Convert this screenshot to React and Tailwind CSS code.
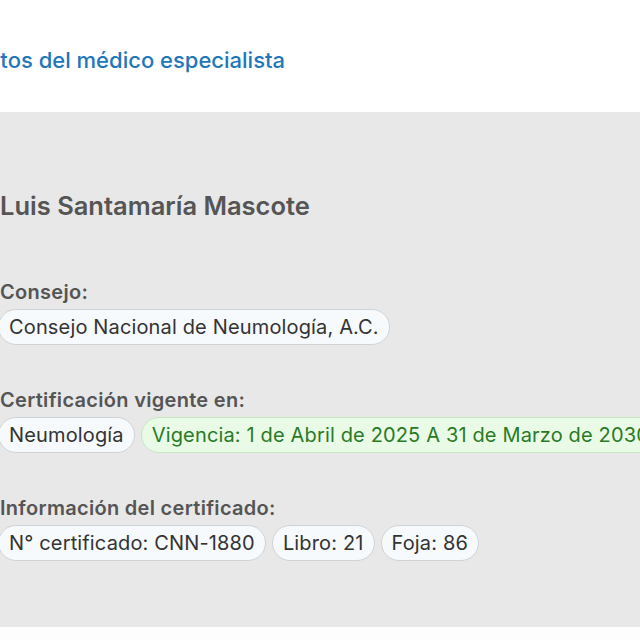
import React from 'react';

const pill = 'inline-flex items-center h-[36px] px-[10px] rounded-full border text-[20px] tracking-[0.15px] leading-none whitespace-nowrap';

function Pill({ children, green }) {
  return (
    <span
      className={
        green
          ? `${pill} bg-[#e9fbe7] border-[#c6e6c0] text-[#2a7a25]`
          : `${pill} bg-[#f7fafc] border-[#cfd3d6] text-[#333333]`
      }
    >
      {children}
    </span>
  );
}

function Field({ label, children }) {
  return (
    <div className="flex flex-col gap-[5px]">
      <h3 className="text-[20px] tracking-[0.3px] font-semibold text-[#555555] leading-[24px] pl-[2px]">{label}</h3>
      <div className="flex gap-[6px]">{children}</div>
    </div>
  );
}

export default function App() {
  return (
    <div className="w-[640px] h-[640px] overflow-hidden bg-[#fdfdfd]" style={{ fontFamily: 'Inter, "Noto Sans", sans-serif' }}>
      <header className="h-[112px] bg-white flex items-center">
        <h2 className="ml-[-28px] mt-[8px] text-[22px] font-medium text-[#1f76bb] whitespace-nowrap">
          Datos del médico especialista
        </h2>
      </header>
      <section className="h-[515px] bg-[#e8e8e8] ml-[-2px] pt-[80px] flex flex-col">
        <h1 className="text-[25.5px] font-semibold text-[#555555] leading-[28px] pl-[2px]">Luis Santamaría Mascote</h1>
        <div className="mt-[60px] flex flex-col gap-[43px]">
          <Field label="Consejo:">
            <Pill>Consejo Nacional de Neumología, A.C.</Pill>
          </Field>
          <Field label="Certificación vigente en:">
            <Pill>Neumología</Pill>
            <Pill green>Vigencia: 1 de Abril de 2025 A 31 de Marzo de 2030</Pill>
          </Field>
          <Field label="Información del certificado:">
            <Pill>N° certificado: CNN-1880</Pill>
            <Pill>Libro: 21</Pill>
            <Pill>Foja: 86</Pill>
          </Field>
        </div>
      </section>
    </div>
  );
}
